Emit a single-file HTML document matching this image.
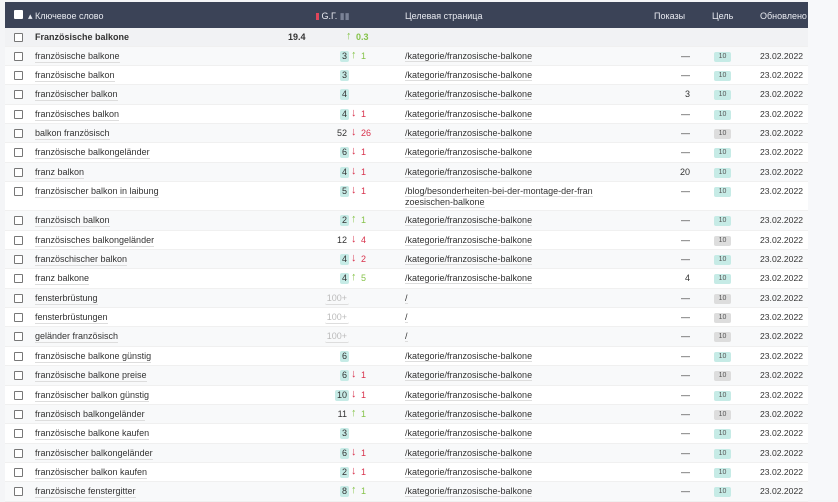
<!DOCTYPE html>
<html><head><meta charset="utf-8"><style>
*{box-sizing:border-box;margin:0;padding:0}
body{width:838px;height:500px;overflow:hidden;background:#f4f5f7;font-family:"Liberation Sans","DejaVu Sans",sans-serif;font-size:9px;color:#333;position:relative}
.tbl{position:absolute;left:5px;top:0;width:803px;background:#fff}
.top{height:2px;background:#f4f5f7}
.hd{height:26px;background:#3b4357;color:#e8eaf0;position:relative;font-size:9px}
.hd span{position:absolute;top:9px}
.r{position:relative;height:19.35px;background:#fff;border-bottom:1px solid #f0f0f0}
.r:nth-child(even){background:#f8f9fa}
.sum{height:18.5px;background:#f1f2f4!important;font-weight:bold}
.cb{position:absolute;left:9px;top:5px;width:9px;height:9px;border:1px solid #777;border-radius:1px;background:#fff}
.kw{position:absolute;left:30px;top:4px;border-bottom:1px solid #ddd;line-height:11px}
.rk{position:absolute;right:459px;top:4px;line-height:11px;padding:0 2px;border-radius:2px}
.rk.t{background:#c6ebe6}
.rk.f{color:#bbb;border-bottom:1px solid #ddd}
.ar{position:absolute;left:346px;top:2px;font-weight:bold;font-size:11px;line-height:13px}
.dl{position:absolute;left:356px;top:4px;line-height:11px}
.up{color:#86c34a}.dn{color:#d8324c}
.tg{position:absolute;left:400px;top:4px;line-height:11px}
.tg u{text-decoration:none;border-bottom:1px solid #ddd}
.sh{position:absolute;right:118px;top:4px;line-height:11px}
.gl{position:absolute;left:709px;top:5px;width:17px;height:10px;border-radius:2px;background:#c6ebe6;font-size:7px;text-align:center;line-height:10px;color:#555}
.gl.g{background:#ddd}
.dt{position:absolute;left:755px;top:4px;line-height:11px;font-size:8.6px}
.sb{position:absolute;left:808px;top:0;width:30px;height:500px;background:#f7f8fa}
</style></head><body>
<div class="sb"></div>
<div class="tbl">
<div class="top"></div>
<div class="hd"><div class="cb" style="top:8px;border-color:#fff"></div><span style="left:23px">▴ Ключевое слово</span><span style="left:311px"><b style="display:inline-block;width:3px;height:7px;background:#e0455a;vertical-align:-1px"></b> G.Г. <span style="position:static;color:#7a8296">▮▮</span></span><span style="left:400px">Целевая страница</span><span style="left:649px">Показы</span><span style="left:707px">Цель</span><span style="left:755px">Обновлено</span></div>
<div class="r sum"><div class="cb"></div><div class="kw" style="border:0">Französische balkone</div><div style="position:absolute;left:283px;top:4px">19.4</div><div class="ar up" style="left:341px">↑</div><div class="dl up" style="left:351px">0.3</div></div>
<div id="rows"></div>
</div>
<script>
var d=[
["französische balkone","3","t","u","1","/kategorie/franzosische-balkone","—",0],
["französische balkon","3","t","","","/kategorie/franzosische-balkone","—",0],
["französischer balkon","4","t","","","/kategorie/franzosische-balkone","3",0],
["französisches balkon","4","t","d","1","/kategorie/franzosische-balkone","—",0],
["balkon französisch","52","","d","26","/kategorie/franzosische-balkone","—",1],
["französische balkongeländer","6","t","d","1","/kategorie/franzosische-balkone","—",0],
["franz balkon","4","t","d","1","/kategorie/franzosische-balkone","20",0],
["französischer balkon in laibung","5","t","d","1","/blog/besonderheiten-bei-der-montage-der-fran<br>zoesischen-balkone","—",0,1],
["französisch balkon","2","t","u","1","/kategorie/franzosische-balkone","—",0],
["französisches balkongeländer","12","","d","4","/kategorie/franzosische-balkone","—",1],
["französchischer balkon","4","t","d","2","/kategorie/franzosische-balkone","—",0],
["franz balkone","4","t","u","5","/kategorie/franzosische-balkone","4",0],
["fensterbrüstung","100+","f","","","/","—",1],
["fensterbrüstungen","100+","f","","","/","—",1],
["geländer französisch","100+","f","","","/","—",1],
["französische balkone günstig","6","t","","","/kategorie/franzosische-balkone","—",0],
["französische balkone preise","6","t","d","1","/kategorie/franzosische-balkone","—",1],
["französischer balkon günstig","10","t","d","1","/kategorie/franzosische-balkone","—",0],
["französisch balkongeländer","11","","u","1","/kategorie/franzosische-balkone","—",1],
["französische balkone kaufen","3","t","","","/kategorie/franzosische-balkone","—",0],
["französischer balkongeländer","6","t","d","1","/kategorie/franzosische-balkone","—",0],
["französischer balkon kaufen","2","t","d","1","/kategorie/franzosische-balkone","—",0],
["französische fenstergitter","8","t","u","1","/kategorie/franzosische-balkone","—",0]];
var h="";
d.forEach(function(r){
h+='<div class="r"'+(r[8]?' style="height:29.5px"':'')+'><div class="cb"></div><div class="kw">'+r[0]+'</div><div class="rk '+r[2]+'">'+r[1]+'</div>'+
(r[3]?'<div class="ar '+(r[3]=="u"?"up":"dn")+'">'+(r[3]=="u"?"↑":"↓")+'</div><div class="dl '+(r[3]=="u"?"up":"dn")+'">'+r[4]+'</div>':'')+
'<div class="tg"><u>'+r[5].replace("<br>","</u><br><u>")+'</u></div><div class="sh">'+r[6]+'</div><div class="gl'+(r[7]?' g':'')+'">10</div><div class="dt">23.02.2022</div></div>';
});
document.getElementById("rows").outerHTML=h;
</script>
</body></html>
